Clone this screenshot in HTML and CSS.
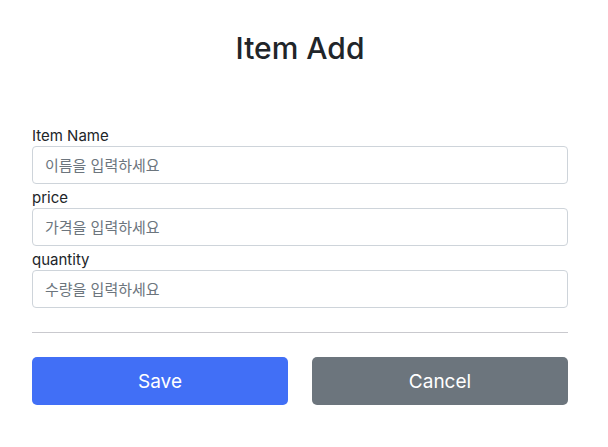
FILE: index.html
```html
<!DOCTYPE html>
<html lang="ko">
<head>
<meta charset="UTF-8" />
<meta name="viewport" content="width=device-width, initial-scale=1" />
<title>Item Add</title>
<link rel="stylesheet" href="styles.css">
</head>
<body>

<div class="container">
  <div class="title">
    <h2>Item Add</h2>
  </div>

  <form class="item-form">
    <div class="field">
      <label for="itemName">Item Name</label>
      <input type="text" id="itemName" placeholder="이름을 입력하세요" />
    </div>
    <div class="field">
      <label for="price">price</label>
      <input type="text" id="price" placeholder="가격을 입력하세요" />
    </div>
    <div class="field">
      <label for="quantity">quantity</label>
      <input type="text" id="quantity" placeholder="수량을 입력하세요" />
    </div>

    <hr />

    <div class="actions">
      <button type="submit" class="btn btn-primary">Save</button>
      <button type="button" class="btn btn-secondary">Cancel</button>
    </div>
  </form>
</div>

</body>
</html>
```

FILE: styles.css
```css
body {
  margin: 0;
  font-family: Inter, "Noto Sans CJK KR", sans-serif;
  font-size: 16px;
  line-height: 1.5;
  color: #212529;
  background: #fff;
}
.container {
  padding: 0 40px 0 32px;
}
.title {
  text-align: center;
  padding: 29px 0 55px;
}
.title h2 {
  margin: 0;
  font-size: 30px;
  font-weight: 500;
  line-height: 38px;
}
.field label {
  display: block;
  height: 22px;
  padding-top: 2px;
  line-height: 24px;
  font-size: 15px;
}
.field input {
  display: block;
  box-sizing: border-box;
  width: 100%;
  height: 38px;
  padding: 6px 12px;
  font-family: inherit;
  font-size: 15px;
  color: #212529;
  border: 1px solid #ced4da;
  border-radius: 4px;
}
.field input::placeholder {
  color: #6c757d;
}
hr {
  margin: 24px 0;
  border: 0;
  border-top: 1px solid #c9c9ce;
}
.actions {
  display: flex;
  gap: 24px;
}
.btn {
  flex: 1;
  height: 48px;
  border: none;
  border-radius: 5px;
  font-family: inherit;
  font-size: 19px;
  color: #fff;
  cursor: pointer;
}
.btn-primary {
  background: #416ff6;
}
.btn-secondary {
  background: #6c757d;
}
```
